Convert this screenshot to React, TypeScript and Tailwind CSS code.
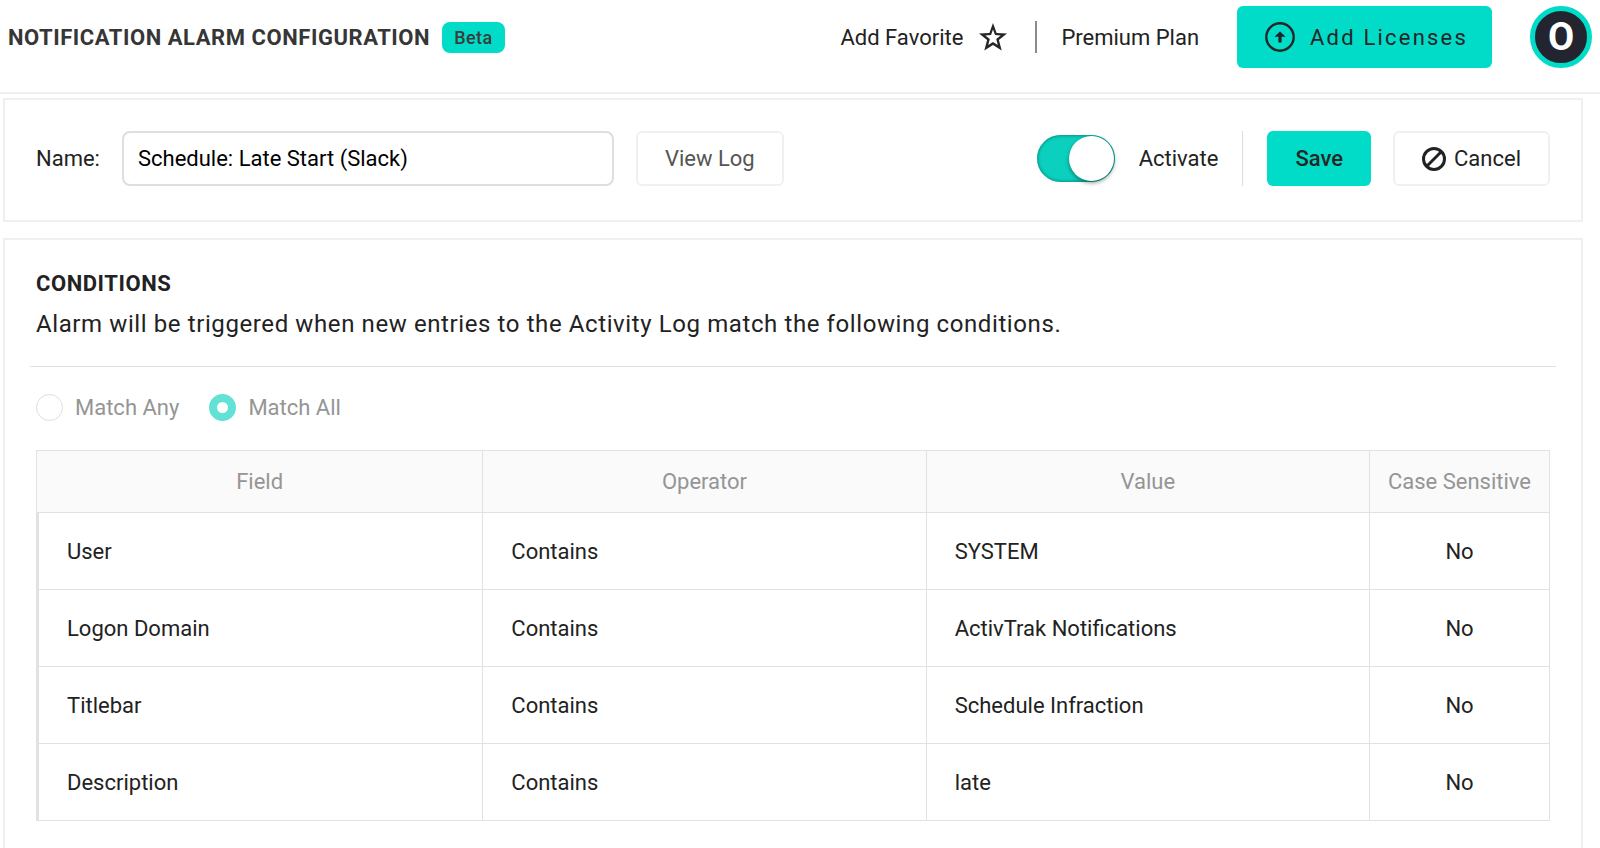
import React, { useState } from 'react'

interface Condition {
  field: string
  operator: string
  value: string
  caseSensitive: boolean
}

const conditions: Condition[] = [
  { field: 'User', operator: 'Contains', value: 'SYSTEM', caseSensitive: false },
  { field: 'Logon Domain', operator: 'Contains', value: 'ActivTrak Notifications', caseSensitive: false },
  { field: 'Titlebar', operator: 'Contains', value: 'Schedule Infraction', caseSensitive: false },
  { field: 'Description', operator: 'Contains', value: 'late', caseSensitive: false },
]

function StarIcon() {
  return (
    <svg className="size-7" viewBox="0 0 28 28" fill="#262626" fillRule="evenodd" aria-hidden="true">
      <path d="M14 0l3.6 9.9 10.4.5-8.1 6.6 2.8 10.6-8.7-5.5-8.7 5.5L8.1 17 0 10.4l10.4-.5zM14 6.4l-2 5.6-5.7.4 4.5 3.6-1.6 6 4.8-3 4.8 3-1.6-6 4.5-3.6L16 12z" />
    </svg>
  )
}

function UploadIcon() {
  return (
    <svg className="size-[30px]" viewBox="0 0 30 30" fill="none" aria-hidden="true">
      <circle cx="15" cy="15" r="13.7" stroke="#262626" strokeWidth="2.4" />
      <path d="M15 9.4l5.6 5.4h-4v5.8h-3.2v-5.8h-4z" fill="#262626" />
    </svg>
  )
}

function BlockIcon() {
  return (
    <svg className="size-6" viewBox="0 0 24 24" fill="none" stroke="#222" strokeWidth="3" aria-hidden="true">
      <circle cx="12" cy="12" r="10.5" />
      <path d="M4.8 19.2L19.2 4.8" />
    </svg>
  )
}

function Header() {
  return (
    <header className="flex h-[94px] items-start justify-between border-b-2 border-[#efefef] px-2">
      <div className="flex h-[74px] items-center gap-3">
        <h1 className="text-[22px] font-bold tracking-wide text-[#363636]">NOTIFICATION ALARM CONFIGURATION</h1>
        <span className="rounded-lg bg-[#00dcc8] px-3 text-lg leading-[31px] font-medium tracking-wide text-[#3c3c3c]">
          Beta
        </span>
      </div>
      <div className="flex h-[74px] items-center text-[22px] text-[#222]">
        <button type="button" className="flex items-center gap-4">
          Add Favorite
          <StarIcon />
        </button>
        <span className="ml-7 h-8 w-0.5 bg-[#8a8a8a]" />
        <a href="#plan" className="ml-6">
          Premium Plan
        </a>
        <button
          type="button"
          className="ml-[38px] flex h-[62px] items-center gap-[15px] rounded-md bg-[#00dcc8] pr-6 pl-7 tracking-widest text-[#262626]"
        >
          <UploadIcon />
          Add Licenses
        </button>
        <button
          type="button"
          aria-label="Account"
          className="ml-[38px] flex size-[62px] items-center justify-center rounded-full border-[5px] border-[#00dcc8] bg-[#22252f] text-[38px] font-bold text-white"
        >
          O
        </button>
      </div>
    </header>
  )
}

function NamePanel() {
  const [name, setName] = useState('Schedule: Late Start (Slack)')
  const [active, setActive] = useState(true)

  return (
    <section className="mt-1 flex h-[124px] items-start justify-between border-2 border-[#f0f0f0] px-[31px] pt-[31px] text-[22px] text-[#222]">
      <div className="flex items-center">
        <label htmlFor="alarm-name">Name:</label>
        <input
          id="alarm-name"
          type="text"
          value={name}
          onChange={(e) => setName(e.target.value)}
          className="ml-[22px] h-[55px] w-[492px] rounded-lg border-2 border-[#dedede] px-3.5 text-black outline-none"
        />
        <button type="button" className="ml-[22px] h-[55px] rounded-md border-2 border-[#f0f0f0] px-[27px] text-[#555]">
          View Log
        </button>
      </div>
      <div className="flex items-center">
        <label className="flex items-center gap-6">
          <span className="relative flex h-[47px] w-[78px]">
            <input
              type="checkbox"
              role="switch"
              checked={active}
              onChange={(e) => setActive(e.target.checked)}
              className="peer h-full w-full appearance-none rounded-full bg-gray-300 shadow-[inset_0_0_3px_1px_rgba(0,110,100,0.6)] checked:bg-[#0cd0be]"
            />
            <span className="pointer-events-none absolute top-px left-px size-[45px] rounded-full bg-white shadow-[0_2px_4px_rgba(0,0,0,0.4)] peer-checked:left-8" />
          </span>
          Activate
        </label>
        <span className="ml-6 h-[55px] w-px bg-[#dedede]" />
        <button type="button" className="ml-6 h-[55px] rounded-md bg-[#00dcc8] px-7 font-medium text-[#262626]">
          Save
        </button>
        <button
          type="button"
          className="ml-[22px] flex h-[55px] items-center gap-2 rounded-md border-2 border-[#f0f0f0] px-[27px]"
        >
          <BlockIcon />
          Cancel
        </button>
      </div>
    </section>
  )
}

const radioClass =
  'size-[27px] appearance-none rounded-full border border-[#dedede] bg-white checked:border-8 checked:border-[#62e2d4]'

function ConditionsPanel() {
  const [match, setMatch] = useState('all')

  return (
    <section className="mt-4 border-2 border-[#f0f0f0] px-[31px] pt-7 pb-12 text-[22px] text-[#222]">
      <h2 className="leading-8 font-bold tracking-wide">CONDITIONS</h2>
      <p className="mt-2 text-2xl leading-8 tracking-wide">
        Alarm will be triggered when new entries to the Activity Log match the following conditions.
      </p>
      <hr className="-mx-1.5 mt-[26px] border-[#e2e2e2]" />
      <div className="mt-6 flex gap-[30px] text-[#959595]">
        <label className="flex items-center gap-3">
          <input
            type="radio"
            name="match"
            checked={match === 'any'}
            onChange={() => setMatch('any')}
            className={radioClass}
          />
          Match Any
        </label>
        <label className="flex items-center gap-3">
          <input
            type="radio"
            name="match"
            checked={match === 'all'}
            onChange={() => setMatch('all')}
            className={radioClass}
          />
          Match All
        </label>
      </div>
      <table className="mt-[26px] w-full table-fixed border-separate border-spacing-0 border-t border-l border-[#e2e2e2]">
        <colgroup>
          <col className="w-[29.5%]" />
          <col />
          <col />
          <col className="w-[180px]" />
        </colgroup>
        <thead>
          <tr className="h-[62px] bg-[#fafafa] text-[#959595]">
            <th className="border-r border-b border-[#e2e2e2] font-normal">Field</th>
            <th className="border-r border-b border-[#e2e2e2] font-normal">Operator</th>
            <th className="border-r border-b border-[#e2e2e2] font-normal">Value</th>
            <th className="border-r border-b border-[#e2e2e2] font-normal whitespace-nowrap">Case Sensitive</th>
          </tr>
        </thead>
        <tbody>
          {conditions.map((c) => (
            <tr key={c.field} className="h-[77px]">
              <td className="border-r border-b border-l-2 border-[#e2e2e2] px-7">{c.field}</td>
              <td className="border-r border-b border-[#e2e2e2] px-7">{c.operator}</td>
              <td className="border-r border-b border-[#e2e2e2] px-7">{c.value}</td>
              <td className="border-r border-b border-[#e2e2e2] text-center">{c.caseSensitive ? 'Yes' : 'No'}</td>
            </tr>
          ))}
        </tbody>
      </table>
    </section>
  )
}

export default function App() {
  return (
    <div className="bg-white font-[Roboto,sans-serif]">
      <Header />
      <main className="pr-[17px] pl-[3px]">
        <NamePanel />
        <ConditionsPanel />
      </main>
    </div>
  )
}
